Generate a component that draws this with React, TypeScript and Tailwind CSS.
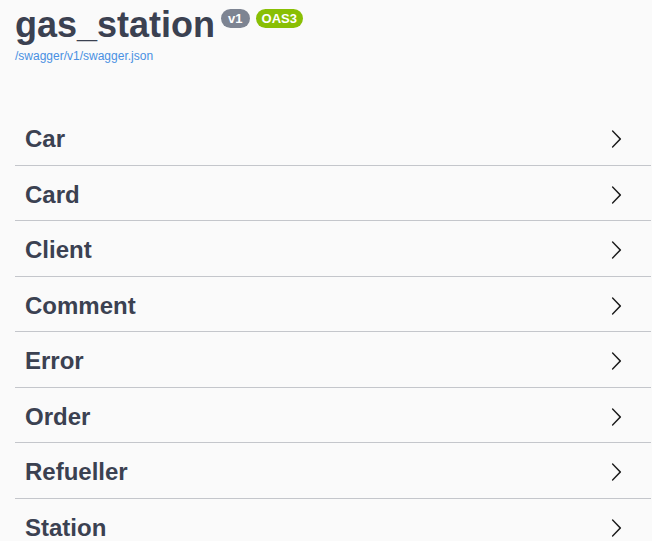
import React from "react";

const tags = ["Car", "Card", "Client", "Comment", "Error", "Order", "Refueller", "Station"];

const Chevron = () => (
    <svg width="20" height="20" viewBox="0 0 20 20" className="fill-[#1b1b1b]">
        <path d="M13.25 10L6.109 2.58a.697.697 0 0 1 0-.979.68.68 0 0 1 .969 0l7.83 7.908a.697.697 0 0 1 0 .979l-7.83 7.908a.68.68 0 0 1-.969 0 .697.697 0 0 1 0-.979L13.25 10z" />
    </svg>
);

const TagRow: React.FC<{ name: string }> = ({ name }) => (
    <div className="flex items-center h-[55.5px] pt-1 border-b border-[#c4c6cb] cursor-pointer">
        <h3 className="pl-[10px] text-[24px] leading-[28px] font-bold text-[#3b4151]">{name}</h3>
        <span className="ml-auto mr-[25px] flex">
            <Chevron />
        </span>
    </div>
);

export default function App() {
    return (
        <div className="min-h-[541px] bg-[#fafafa] pl-[15px] pr-[1px] overflow-hidden font-['Liberation_Sans',Arial,sans-serif]">
            <div className="pt-1">
                <div className="flex items-start">
                    <h2 className="text-[36px] leading-[41px] font-bold text-[#3b4151]">gas_station</h2>
                    <span className="ml-[6px] mt-[5px] h-[19px] px-[7px] rounded-full bg-[#7d8492] text-white text-[13px] font-bold leading-[19px]">
                        v1
                    </span>
                    <span className="ml-[6px] mt-[5px] h-[19px] px-[6px] rounded-full bg-[#89bf04] text-white text-[13px] font-bold leading-[19px]">
                        OAS3
                    </span>
                </div>
                <a href="#" className="block mt-[4px] text-[12px] leading-[14px] text-[#4990e2]">
                    /swagger/v1/swagger.json
                </a>
            </div>
            <div className="mt-[47px]">
                {tags.map((t) => (
                    <TagRow key={t} name={t} />
                ))}
            </div>
        </div>
    );
}
